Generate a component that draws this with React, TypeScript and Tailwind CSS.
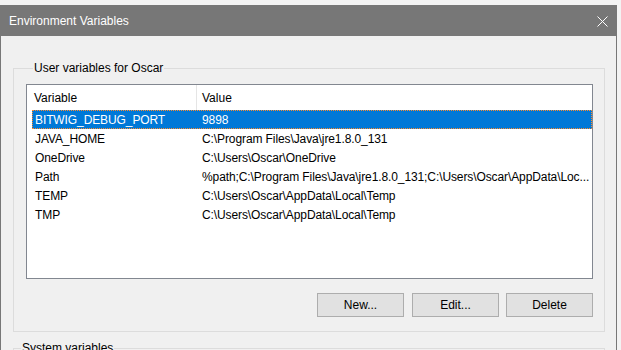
const rows = [
  { name: 'BITWIG_DEBUG_PORT', value: '9898' },
  { name: 'JAVA_HOME', value: 'C:\\Program Files\\Java\\jre1.8.0_131' },
  { name: 'OneDrive', value: 'C:\\Users\\Oscar\\OneDrive' },
  { name: 'Path', value: '%path;C:\\Program Files\\Java\\jre1.8.0_131;C:\\Users\\Oscar\\AppData\\Loc...' },
  { name: 'TEMP', value: 'C:\\Users\\Oscar\\AppData\\Local\\Temp' },
  { name: 'TMP', value: 'C:\\Users\\Oscar\\AppData\\Local\\Temp' },
];

function WinButton({ label }: { label: string }) {
  return (
    <button className="w-[87px] h-[24px] bg-[#e1e1e1] border border-[#adadad] text-black leading-[23px]">
      {label}
    </button>
  );
}

export default function App() {
  return (
    <div className="w-[621px] h-[350px] overflow-hidden bg-[#f3f3f3] pt-[5px] font-['Liberation_Sans',Arial,sans-serif] text-[12px] text-black">
      <div className="w-[617px] h-[345px] border-x border-t border-[#777777] bg-[#f0f0f0] flex flex-col">
        {/* title bar */}
        <div className="h-[30px] shrink-0 bg-[#777777] flex items-center justify-between pl-[8px] pr-[8px] text-white">
          <span>Environment Variables</span>
          <svg width="11" height="11" viewBox="0 0 11 11" fill="none" stroke="white" strokeWidth="1">
            <path d="M0.5 0.5 L10.5 10.5 M10.5 0.5 L0.5 10.5" />
          </svg>
        </div>

        <div className="flex-1 min-w-0 pl-[12px] pr-[11px] pt-[24px]">
          <fieldset className="min-w-0 w-[592px] border border-[#dcdcdc] pl-[12px] pr-[11px] pb-[14px]">
            <legend className="ml-[7px] px-[1px] leading-[17px]">User variables for Oscar</legend>

            <div className="mt-[7px] h-[195px] border border-[#828790] bg-white overflow-hidden">
              <div className="h-[25px] flex">
                <div className="w-[169px] pl-[7px] pt-[2px] leading-[23px]">Variable</div>
                <div className="w-px h-full bg-[#e5e5e5]" />
                <div className="flex-1 pl-[5px] pt-[2px] leading-[23px]">Value</div>
              </div>
              <div className="ml-[5px] tracking-[-0.1px]">
                {rows.map((r, i) => (
                  <div
                    key={r.name}
                    className={
                      i === 0
                        ? 'flex h-[19px] leading-[19px] overflow-hidden bg-[#0078d7] text-white border border-dotted border-[#ff8b2b]'
                        : 'flex h-[19px] leading-[21px] overflow-hidden'
                    }
                  >
                    <span className={i === 0 ? 'w-[164px] pl-[2px] shrink-0' : 'w-[165px] pl-[3px] shrink-0'}>{r.name}</span>
                    <span className="flex-1 min-w-0 pl-[5px] pr-[2px] whitespace-nowrap overflow-hidden">
                      {r.value}
                    </span>
                  </div>
                ))}
              </div>
            </div>

            <div className="mt-[14px] flex justify-end gap-[7px]">
              <div className="mr-[1px]">
                <WinButton label="New..." />
              </div>
              <WinButton label="Edit..." />
              <WinButton label="Delete" />
            </div>
          </fieldset>

          <fieldset className="min-w-0 w-[592px] mt-[8px] h-[40px] border border-[#dcdcdc]">
            <legend className="ml-[7px] px-[1px] leading-[17px]">System variables</legend>
          </fieldset>
        </div>
      </div>
    </div>
  );
}
